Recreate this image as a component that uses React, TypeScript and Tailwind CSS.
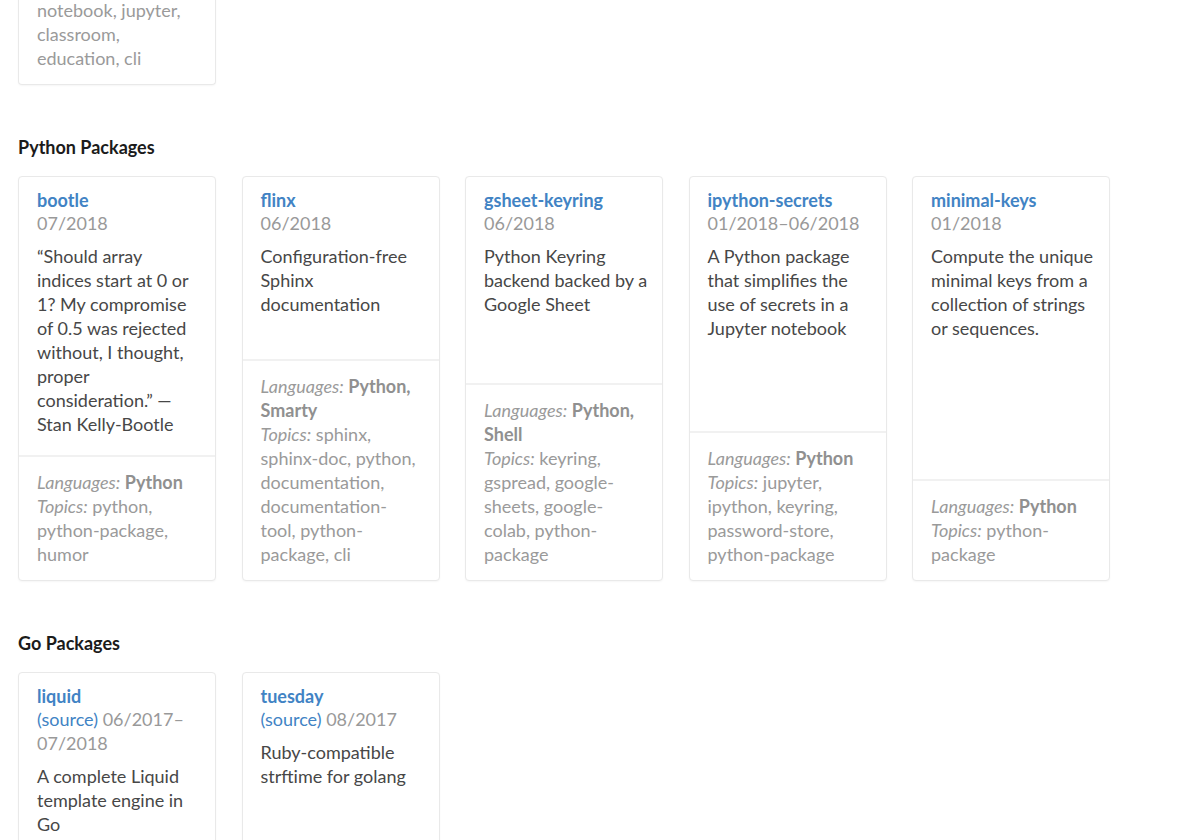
type Pkg = {
  name: string;
  source?: boolean;
  date: string;
  desc: string;
  langs: string;
  topics: string;
};

const python: Pkg[] = [
  {
    name: 'bootle',
    date: '07/2018',
    desc: '“Should array indices start at 0 or 1? My compromise of 0.5 was rejected without, I thought, proper consideration.” — Stan Kelly-Bootle',
    langs: 'Python',
    topics: 'python, python-package, humor',
  },
  {
    name: 'flinx',
    date: '06/2018',
    desc: 'Configuration-free Sphinx documentation',
    langs: 'Python, Smarty',
    topics: 'sphinx, sphinx-doc, python, documentation, documentation-tool, python-package, cli',
  },
  {
    name: 'gsheet-keyring',
    date: '06/2018',
    desc: 'Python Keyring backend backed by a Google Sheet',
    langs: 'Python, Shell',
    topics: 'keyring, gspread, google-sheets, google-colab, python-package',
  },
  {
    name: 'ipython-secrets',
    date: '01/2018–06/2018',
    desc: 'A Python package that simplifies the use of secrets in a Jupyter notebook',
    langs: 'Python',
    topics: 'jupyter, ipython, keyring, password-store, python-package',
  },
  {
    name: 'minimal-keys',
    date: '01/2018',
    desc: 'Compute the unique minimal keys from a collection of strings or sequences.',
    langs: 'Python',
    topics: 'python-package',
  },
];

const golang: Pkg[] = [
  {
    name: 'liquid',
    source: true,
    date: '06/2017–07/2018',
    desc: 'A complete Liquid template engine in Go',
    langs: 'Go',
    topics: 'liquid, liquid-templating-engine, golang, jekyll',
  },
  {
    name: 'tuesday',
    source: true,
    date: '08/2017',
    desc: 'Ruby-compatible strftime for golang',
    langs: 'Go',
    topics: 'strftime, golang, ruby',
  },
];

function Card({ pkg }: { pkg: Pkg }) {
  return (
    <div className="flex flex-col rounded-[4px] border border-[#e9e9e9] bg-white shadow-[0_1px_2px_rgba(0,0,0,0.04)]">
      <div className="flex-1 pt-[13px] pr-[14.5px] pb-[19px] pl-[18px]">
        <a href="#" className="block leading-[21px] font-bold text-[#4183c4]">
          {pkg.name}
        </a>
        <div className="text-[#999]">
          {pkg.source && <a href="#" className="text-[#4183c4]">(source)</a>}
          {pkg.source && ' '}
          {pkg.date}
        </div>
        <p className="mt-[9px] text-[#474747]">{pkg.desc}</p>
      </div>
      <div className="border-t-2 border-[#f1f1f1] px-[18px] pt-[13px] pb-[14px] text-[#9a9a9a]">
        <div>
          <i>Languages:</i> <b className="text-[#909090]">{pkg.langs}</b>
        </div>
        <div>
          <i>Topics:</i> {pkg.topics}
        </div>
      </div>
    </div>
  );
}

function Section({ title, pkgs }: { title: string; pkgs: Pkg[] }) {
  return (
    <section className="mt-[50px]">
      <h2 className="mb-[17px] font-bold text-[#1b1b1b]">{title}</h2>
      <div className="grid grid-cols-[repeat(5,198px)] gap-x-[25.5px] gap-y-6">
        {pkgs.map((p) => (
          <Card key={p.name} pkg={p} />
        ))}
      </div>
    </section>
  );
}

export default function App() {
  return (
    <div
      className="min-h-screen bg-white px-[18px] pb-10 text-[18px] leading-[24px]"
      style={{ fontFamily: 'Lato, "Open Sans", sans-serif' }}
    >
      <div className="grid grid-cols-[repeat(5,198px)] gap-x-[25.5px]">
        <div className="-mt-[2px] rounded-b-[4px] border border-t-0 border-[#e9e9e9] bg-white px-[18px] pb-[14px] text-[#9a9a9a] shadow-[0_1px_2px_rgba(0,0,0,0.04)]">
          <div>notebook, jupyter,</div>
          <div>classroom,</div>
          <div>education, cli</div>
        </div>
      </div>
      <Section title="Python Packages" pkgs={python} />
      <Section title="Go Packages" pkgs={golang} />
    </div>
  );
}
